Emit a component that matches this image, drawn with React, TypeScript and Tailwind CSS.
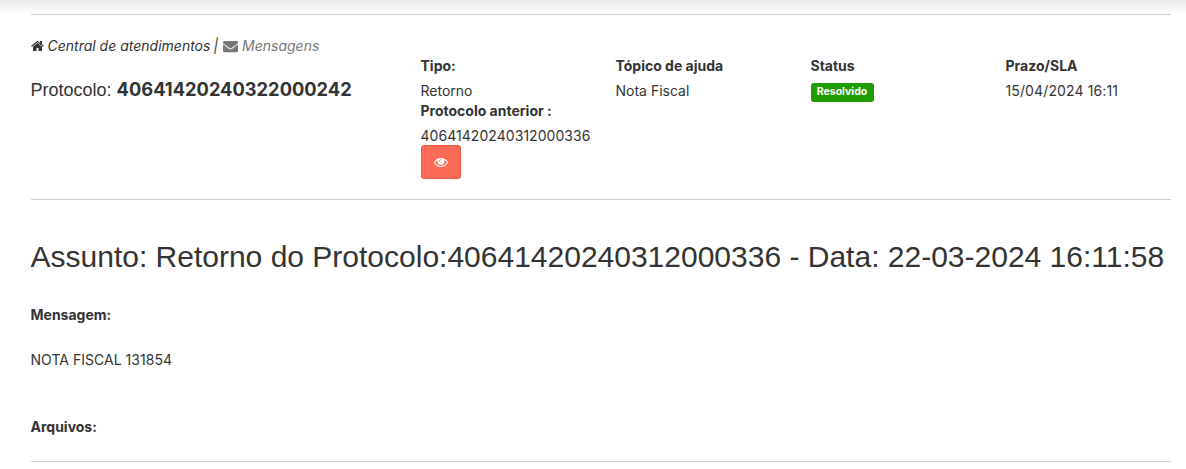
import { FaEnvelope } from 'react-icons/fa';

function HomeIcon() {
  return (
    <svg className="mr-[4px] h-[14px] w-[13px]" fill="currentColor" viewBox="64 0 1664 1792">
      <path d="M1472 992v480q0 26-19 45t-45 19h-384v-384h-256v384h-384q-26 0-45-19t-19-45v-480q0-1 .5-3t.5-3l575-474 575 474q1 2 1 6zm223-69l-62 74q-8 9-21 11h-3q-13 0-21-7l-692-577-692 577q-12 8-24 7-13-2-21-11l-62-74q-8-10-7-23.5t11-21.5l719-599q32-26 76-26t76 26l244 204v-195q0-14 9-23t23-9h192q14 0 23 9t9 23v408l219 182q10 8 11 21.5t-7 23.5z" />
    </svg>
  );
}

function EyeIcon() {
  return (
    <svg className="h-[14px] w-[14px]" fill="currentColor" viewBox="0 0 1792 1792">
      <path d="M1664 960q-152-236-381-353 61 104 61 225 0 185-131.5 316.5t-316.5 131.5-316.5-131.5-131.5-316.5q0-121 61-225-229 117-381 353 133 205 333.5 326.5t434.5 121.5 434.5-121.5 333.5-326.5zm-720-384q0-20-14-34t-34-14q-125 0-214.5 89.5t-89.5 214.5q0 20 14 34t34 14 34-14 14-34q0-86 61-147t147-61q20 0 34-14t14-34zm848 384q0 34-20 69-140 230-376.5 368.5t-499.5 138.5-499.5-139-376.5-368q-20-35-20-69t20-69q140-229 376.5-368t499.5-139 499.5 139 376.5 368q20 35 20 69z" />
    </svg>
  );
}

export default function App() {
  return (
    <div className="min-h-[469px] bg-white font-['Inter',sans-serif] text-[14px] leading-[20px] text-[#333333]">
      <div className="h-[14px] bg-gradient-to-b from-[#e8e8e8] to-white" />
      <main className="ml-[30.5px] w-[1140.5px]">
        <hr className="border-t border-[#cccccc]" />

        <section className="flex pt-[21px]">
          <div className="w-[390px] shrink-0">
            <p className="flex h-[20px] items-center italic">
              <HomeIcon />
              <span>Central de atendimentos</span>
              <span className="ml-[3px] mr-[5px]">|</span>
              <FaEnvelope className="mr-[4px] h-[15px] w-[15px] text-[#777777]" />
              <span className="text-[#777777]">Mensagens</span>
            </p>
            <h2 className="mt-[23px] font-['Liberation_Sans',sans-serif] text-[18px] leading-[20px]">
              Protocolo:{' '}
              <strong className="font-['Inter',sans-serif] text-[18.3px] font-bold">40641420240322000242</strong>
            </h2>
          </div>

          <div className="w-[195px] shrink-0 pt-[20px]">
            <p className="font-bold">Tipo:</p>
            <p className="mt-[5px]">Retorno</p>
            <p className="font-bold">Protocolo anterior :</p>
            <p className="mt-[5px] h-[19px] tracking-[0.05px]">40641420240312000336</p>
            <button
              className="flex h-[34px] w-[40px] items-center justify-center rounded-[3px] border border-[#f4593f] bg-[#fc6b57] text-white"
              type="button"
            >
              <EyeIcon />
            </button>
          </div>

          <div className="w-[195px] shrink-0 pt-[20px]">
            <p className="font-bold">Tópico de ajuda</p>
            <p className="mt-[5px]">Nota Fiscal</p>
          </div>

          <div className="w-[195px] shrink-0 pt-[20px]">
            <p className="font-bold">Status</p>
            <span className="mt-[7px] flex h-[19px] w-[63px] items-center justify-center rounded-[3px] bg-[#1f9d00] text-[10.5px] font-bold leading-none text-white">
              Resolvido
            </span>
          </div>

          <div className="pt-[20px]">
            <p className="font-bold">Prazo/SLA</p>
            <p className="mt-[5px] tracking-[0.12px]">15/04/2024 16:11</p>
          </div>
        </section>

        <hr className="mt-[20px] border-t border-[#cccccc]" />

        <h1 className="mt-[40px] whitespace-nowrap font-['Liberation_Sans',sans-serif] text-[30px] leading-[33px]">
          Assunto: Retorno do Protocolo:40641420240312000336 - Data: 22-03-2024 16:11:58
        </h1>

        <p className="mt-[32px] font-bold">Mensagem:</p>
        <p className="mt-[25px] tracking-[0.03px]">NOTA FISCAL 131854</p>
        <p className="mt-[47px] font-bold">Arquivos:</p>

        <hr className="mt-[24px] border-t border-[#cccccc]" />
      </main>
    </div>
  );
}
